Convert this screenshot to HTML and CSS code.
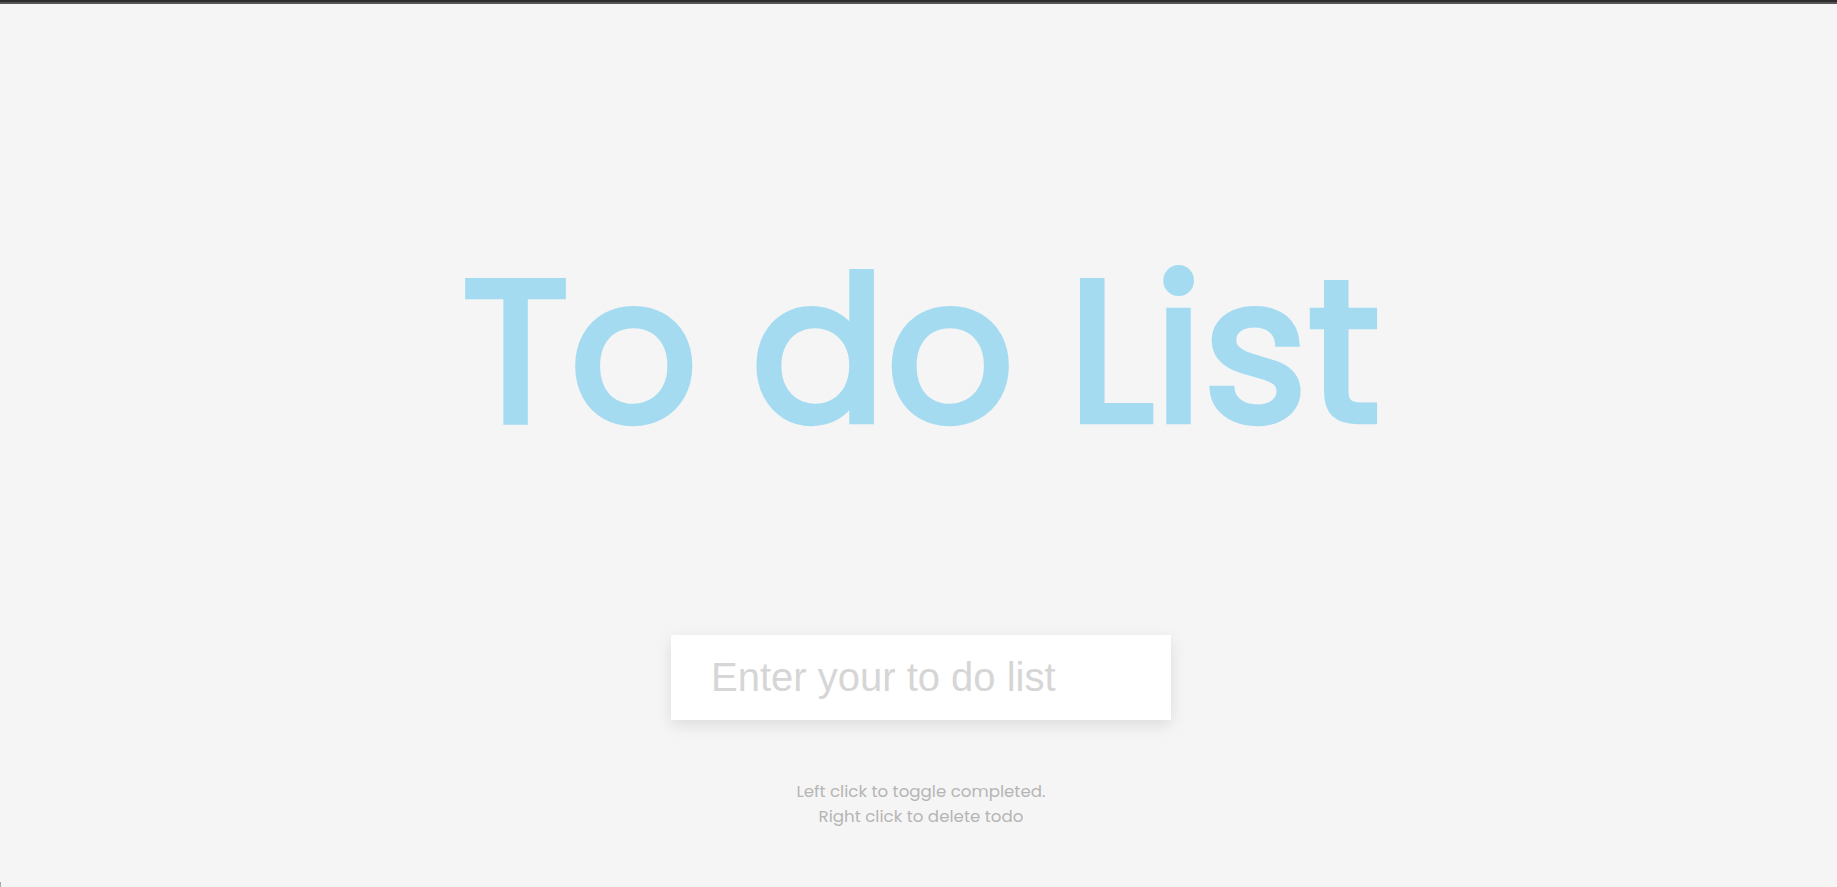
FILE: index.html
```
<!DOCTYPE html>
<html lang="en">
<head>
<meta charset="utf-8">
<title>To do List</title>
<link rel="stylesheet" href="styles.css">
</head>
<body>
<main class="page">
<h1 class="title">To do List</h1>
<form class="form"><input class="input" type="text" placeholder="Enter your to do list" autocomplete="off"></form>
<small class="help">Left click to toggle completed.<br>Right click to delete todo</small>
</main>
<span class="corner"></span>
</body>
</html>
```
FILE: styles.css
```
* { box-sizing: border-box; }
body {
  margin: 0;
  height: 887px;
  overflow: hidden;
  background: #f5f5f5;
  font-family: Poppins, Inter, sans-serif;
}
.page {
  height: 887px;
  padding-left: 5px;
  border-top: 2px solid #2c2c2c;
  box-shadow: inset 0 2px #555;
  display: flex;
  flex-direction: column;
  align-items: center;
}
.title {
  margin: 193px 0 0;
  height: 312px;
  line-height: 312px;
  font-size: 200px;
  font-weight: 400;
  color: #a5dbf1;
  -webkit-text-stroke: 6.25px #a5dbf1;
  stroke-linejoin: round;
  white-space: nowrap;
}
.form { margin-top: 128px; }
.input {
  display: block;
  width: 500px;
  height: 85px;
  padding: 0 40px;
  border: 0;
  background: #fff;
  font: 40px "Liberation Sans", sans-serif;
  box-shadow: 0 5px 15px rgba(0, 0, 0, 0.1);
}
.input::placeholder { color: #d6d6d6; opacity: 1; }
.help {
  margin-top: 59px;
  font-size: 16.67px;
  line-height: 25px;
  color: #b5b5b5;
  text-align: center;
}
.corner {
  position: absolute;
  left: 0;
  bottom: 0;
  width: 1px;
  height: 5px;
  background: #aaa;
}
```
